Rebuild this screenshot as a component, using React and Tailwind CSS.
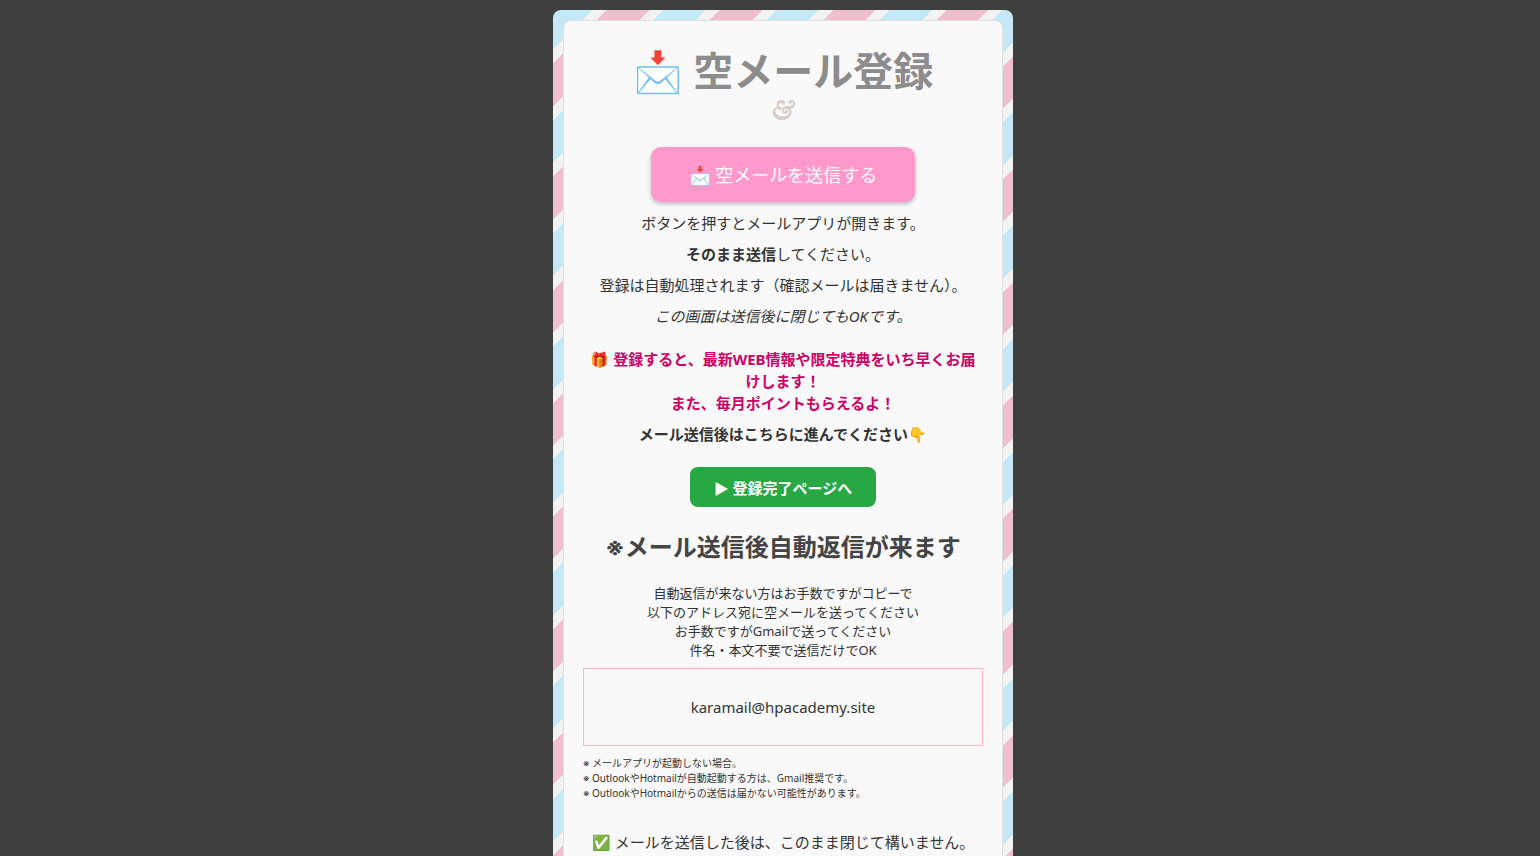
const stripes =
  'bg-[repeating-linear-gradient(135deg,#c3e8f6_-2px,#c3e8f6_28px,#f2f2f2_28px,#f2f2f2_38px,#efc0cb_38px,#efc0cb_68px,#f2f2f2_68px,#f2f2f2_78px)]';

const address = 'karamail@hpacademy.site';

const notes = [
  'メールアプリが起動しない場合。',
  'OutlookやHotmailが自動起動する方は、Gmail推奨です。',
  'OutlookやHotmailからの送信は届かない可能性があります。',
];

function Mark() {
  return <span className="font-['Inter','Noto_Sans_CJK_JP',sans-serif]">※</span>;
}

export default function App() {
  return (
    <div className="min-h-screen bg-[#3f3f3f] pt-[10px] pl-[26px] text-[15px] leading-[22px] text-[#333] font-['Noto_Sans','Noto_Sans_CJK_JP',sans-serif]">
      <main className={`mx-auto w-full max-w-[460px] rounded-lg p-[10px] ${stripes}`}>
        <div className="flex flex-col items-center rounded-lg border border-[#e0e0e0] bg-[#f9f9f9] px-[19px] pt-6 pb-8 text-center">
          <h1 className="text-[40px] leading-[52px] font-bold text-[#8c8c8c]">📩 空メール登録</h1>
          <p className="text-[26px] leading-7 font-bold text-[#d7ccc8] italic font-['Libre_Baskerville','Liberation_Serif',serif]">
            &amp;
          </p>

          <a
            href={`mailto:${address}`}
            className="mt-[22px] rounded-[10px] bg-[#ff99cc] px-[38px] pt-[15px] pb-[13px] text-lg leading-[27px] text-white shadow-[0_2px_4px_rgba(0,0,0,0.25)]"
          >
            📩 空メールを送信する
          </a>

          <div className="mt-[10px] space-y-[9px]">
            <p>ボタンを押すとメールアプリが開きます。</p>
            <p>
              <strong>そのまま送信</strong>してください。
            </p>
            <p>登録は自動処理されます（確認メールは届きません）。</p>
            <p>
              <em>この画面は送信後に閉じてもOKです。</em>
            </p>
          </div>

          <p className="mt-[21px] px-1 font-bold text-[#cc0066]">
            🎁 登録すると、最新WEB情報や限定特典をいち早くお届けします！
            <br />
            また、毎月ポイントもらえるよ！
          </p>
          <p className="mt-[9px] font-bold">メール送信後はこちらに進んでください👇</p>

          <a
            href="#complete"
            className="mt-[22px] rounded-lg bg-[#28a745] px-6 pt-[10px] pb-2 font-bold text-white"
          >
            ▶ 登録完了ページへ
          </a>

          <h2 className="mt-[22px] text-2xl leading-9 font-bold text-[#444]">
            <Mark />
            メール送信後自動返信が来ます
          </h2>

          <p className="mt-[18px] text-[13px] leading-[19px]">
            自動返信が来ない方はお手数ですがコピーで
            <br />
            以下のアドレス宛に空メールを送ってください
            <br />
            お手数ですがGmailで送ってください
            <br />
            件名・本文不要で送信だけでOK
          </p>
          <div className="mt-2 w-full border border-[#ffb6c1] py-[27px]">{address}</div>

          <div className="mt-[10px] w-full text-left text-[10px] leading-[15px]">
            {notes.map((note) => (
              <p key={note}>
                <Mark /> {note}
              </p>
            ))}
          </div>

          <p className="mt-[30px]">✅ メールを送信した後は、このまま閉じて構いません。</p>
        </div>
      </main>
    </div>
  );
}
